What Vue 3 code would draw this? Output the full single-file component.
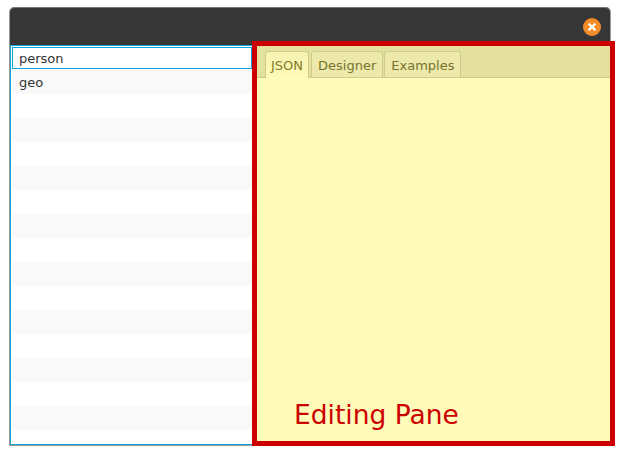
<template>
  <div class="window">
    <div class="titlebar">
      <button class="close-btn">
        <svg width="18" height="18" viewBox="0 0 18 18">
          <circle cx="9" cy="9" r="9" fill="#f28c28" />
          <path d="M5.6 5.6 L12.4 12.4 M12.4 5.6 L5.6 12.4" stroke="#fff" stroke-width="2.2" />
        </svg>
      </button>
    </div>
    <div class="content">
      <ul class="list">
        <li
          v-for="(row, i) in rows"
          :key="i"
          class="row"
          :class="{ odd: i % 2 === 1, selected: i === 0 }"
        >{{ row }}</li>
      </ul>
      <div class="editor">
        <div class="tabs">
          <div
            v-for="tab in tabs"
            :key="tab"
            class="tab"
            :class="{ active: tab === activeTab }"
          >{{ tab }}</div>
        </div>
        <div class="tab-body"></div>
      </div>
    </div>
    <!-- 标注框，盖在窗口上 -->
    <div class="annotation">
      <span class="annotation-label">Editing Pane</span>
    </div>
  </div>
</template>

<script setup>
import { ref } from 'vue'

const rows = ['person', 'geo', ...Array(15).fill('')]
const tabs = ['JSON', 'Designer', 'Examples']
const activeTab = ref('JSON')
</script>

<style>
html, body {
  background: #fff;
  overflow: hidden;
}
</style>

<style scoped>
.window {
  position: relative;
  box-sizing: border-box;
  width: 602px;
  height: 439px;
  margin: 7px 0 0 9px;
  border: 1px solid #999;
  border-top-color: #777;
  border-radius: 5px 5px 0 0;
  background: #fff;
  font-family: "DejaVu Sans", sans-serif;
  display: flex;
  flex-direction: column;
}

.titlebar {
  height: 37px;
  flex: none;
  background: #363636;
  border-radius: 4px 4px 0 0;
  display: flex;
  align-items: center;
  justify-content: flex-end;
  padding-right: 9px;
  box-sizing: border-box;
}

.close-btn {
  width: 18px;
  height: 18px;
  padding: 0;
  border: none;
  background: transparent;
  display: block;
}

.close-btn svg {
  display: block;
}

.content {
  flex: 1;
  min-height: 0;
  display: flex;
  border: 1px solid #0ea5d9;
  border-right: none;
}

.list {
  width: 241px;
  flex: none;
  box-sizing: border-box;
  margin: 0;
  padding: 0 0 0 1px;
  list-style: none;
  overflow: hidden;
}

.row {
  height: 24px;
  box-sizing: border-box;
  padding: 1px 0 0 7px;
  font-size: 13px;
  line-height: 23px;
  color: #333;
  background: #fff;
}

.row.odd {
  background: #f9f9f9;
}

.row.selected {
  height: 22px;
  margin: 1px 0;
  padding: 1px 0 0 6px;
  border: 1px solid #0ea5d9;
  line-height: 19px;
}

.editor {
  flex: 1;
  display: flex;
  flex-direction: column;
  background: #fffbb8;
}

.tabs {
  height: 32px;
  flex: none;
  box-sizing: border-box;
  display: flex;
  align-items: flex-end;
  gap: 1px;
  padding-left: 13px;
  background: #e4e19e;
  border-bottom: 1px solid #cfcc8b;
}

.tab {
  height: 26px;
  box-sizing: border-box;
  padding: 1px 6px 0;
  font-size: 13px;
  line-height: 25px;
  color: #77732c;
  background: #ece9aa;
  border: 1px solid #cfcc8b;
  border-bottom: none;
  border-radius: 3px 3px 0 0;
}

.tab.active {
  height: 27px;
  margin: 0 1px -1px 0;
  padding: 1px 5px 0;
  background: linear-gradient(#f5f2b2, #fffbb8);
  color: #857a28;
}

.tab-body {
  flex: 1;
}

.annotation {
  position: absolute;
  left: 242px;
  top: 33px;
  width: 363px;
  height: 405px;
  box-sizing: border-box;
  border: 5px solid #cc0000;
  pointer-events: none;
}

.annotation-label {
  position: absolute;
  left: 37px;
  bottom: 10px;
  font-size: 26.5px;
  line-height: 32px;
  color: #cc0000;
}
</style>
